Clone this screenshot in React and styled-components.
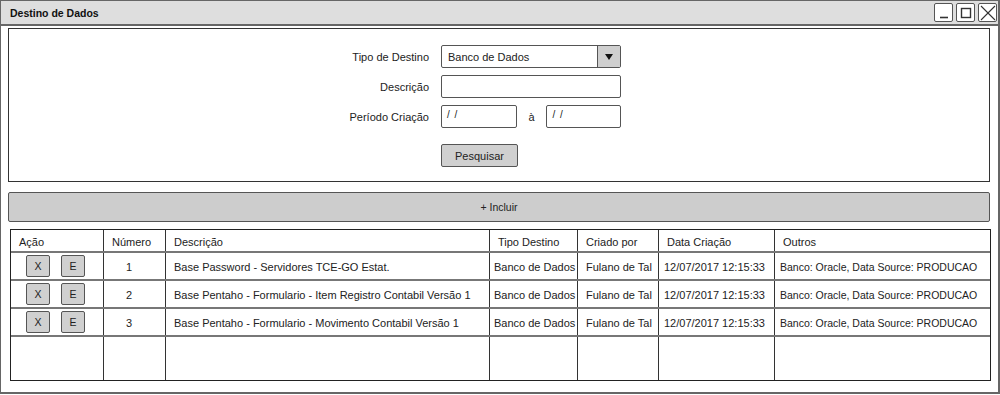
import React from 'react'
import styled, { createGlobalStyle } from 'styled-components'

const GlobalStyle = createGlobalStyle`
  html, body { margin: 0; padding: 0; background: #fff; }
  body {
    font-family: "Liberation Sans", Arial, sans-serif;
    font-size: 11px;
    color: #222;
  }
  * { box-sizing: border-box; }
`

const rows = [
  { num: 1, desc: 'Base Password - Servidores TCE-GO Estat.' },
  { num: 2, desc: 'Base Pentaho - Formulario - Item Registro Contabil Versão 1' },
  { num: 3, desc: 'Base Pentaho - Formulario - Movimento Contabil Versão 1' },
]

const cols = '92px 62px 324px 88px 81px 116px 1fr'

function App() {
  return (
    <>
      <GlobalStyle />
      <Window>
        <TitleBar>
          <Title>Destino de Dados</Title>
          <Controls>
            <CtrlBox>
              <svg width="14" height="14" viewBox="0 0 14 14">
                <line x1="3" y1="11.5" x2="11" y2="11.5" stroke="#333" strokeWidth="1.6" />
              </svg>
            </CtrlBox>
            <CtrlBox>
              <svg width="14" height="14" viewBox="0 0 14 14">
                <rect x="2.5" y="2.5" width="9" height="9" fill="none" stroke="#333" strokeWidth="1.4" />
              </svg>
            </CtrlBox>
            <CtrlBox>
              <svg width="16" height="16" viewBox="0 0 16 16">
                <line x1="1" y1="1" x2="15" y2="15" stroke="#333" strokeWidth="1.1" />
                <line x1="15" y1="1" x2="1" y2="15" stroke="#333" strokeWidth="1.1" />
              </svg>
            </CtrlBox>
          </Controls>
        </TitleBar>

        <Body>
          <SearchPanel>
            <Form>
              <Label>Tipo de Destino</Label>
              <Select>
                <span>Banco de Dados</span>
                <DropBtn>
                  <svg width="10" height="8" viewBox="0 0 10 8">
                    <polygon points="1,1 9,1 5,7" fill="#111" />
                  </svg>
                </DropBtn>
              </Select>

              <Label>Descrição</Label>
              <Input />

              <Label>Período Criação</Label>
              <DateRow>
                <Input $w="76px">/ /</Input>
                <Between>à</Between>
                <Input $w="75px">/ /</Input>
              </DateRow>

              <span />
              <SearchBtn>Pesquisar</SearchBtn>
            </Form>
          </SearchPanel>

          <AddBar>+ Incluir</AddBar>

          <Table>
            <HeadRow>
              <Cell>Ação</Cell>
              <Cell>Número</Cell>
              <Cell>Descrição</Cell>
              <Cell>Tipo Destino</Cell>
              <Cell>Criado por</Cell>
              <Cell>Data Criação</Cell>
              <Cell>Outros</Cell>
            </HeadRow>
            {rows.map((r) => (
              <DataRow key={r.num}>
                <ActionCell>
                  <SmallBtn>X</SmallBtn>
                  <SmallBtn>E</SmallBtn>
                </ActionCell>
                <Cell $pl="22px">{r.num}</Cell>
                <Cell>{r.desc}</Cell>
                <Cell $pl="4px">Banco de Dados</Cell>
                <Cell $pl="8px">Fulano de Tal</Cell>
                <Cell $pl="5px">12/07/2017 12:15:33</Cell>
                <Cell $pl="5px" $fs="10.5px">Banco: Oracle, Data Source: PRODUCAO</Cell>
              </DataRow>
            ))}
            <EmptyRow>
              <Cell />
              <Cell />
              <Cell />
              <Cell />
              <Cell />
              <Cell />
              <Cell />
            </EmptyRow>
          </Table>
        </Body>
      </Window>
    </>
  )
}

const Window = styled.div`
  width: 1000px;
  height: 394px;
  border: 1px solid #666;
  border-right-width: 2px;
  border-bottom-width: 2px;
  background: #fff;
  display: flex;
  flex-direction: column;
`

const TitleBar = styled.div`
  height: 25px;
  background: #dedede;
  border-bottom: 2px solid #666;
  display: flex;
  align-items: center;
  justify-content: space-between;
  padding: 0 1px 0 9px;
`

const Title = styled.div`
  font-weight: bold;
  font-size: 10.5px;
  color: #111;
`

const Controls = styled.div`
  display: flex;
  gap: 3px;
`

const CtrlBox = styled.div`
  width: 19px;
  height: 19px;
  border: 1.5px solid #555;
  border-radius: 2px;
  background: #fff;
  display: flex;
  align-items: center;
  justify-content: center;
`

const Body = styled.div`
  flex: 1;
  padding: 2px 8px 0 7px;
  display: flex;
  flex-direction: column;
`

const SearchPanel = styled.div`
  height: 154px;
  border: 1px solid #333;
  border-right-width: 1.5px;
  padding: 16px 0 0 320px;
`

const Form = styled.div`
  display: grid;
  grid-template-columns: 100px 180px;
  column-gap: 12px;
  row-gap: 7px;
  align-items: center;

  & > :nth-child(7),
  & > :nth-child(8) {
    margin-top: 9px;
  }
`

const Label = styled.div`
  text-align: right;
  color: #222;
`

const Select = styled.div`
  height: 23px;
  border: 1.5px solid #555;
  border-radius: 2px;
  display: flex;
  align-items: center;
  justify-content: space-between;
  padding-left: 6px;
  background: #fff;
`

const DropBtn = styled.div`
  width: 23px;
  height: 100%;
  border-left: 1.5px solid #555;
  background: #cfcfcf;
  display: flex;
  align-items: center;
  justify-content: center;
`

const Input = styled.div`
  width: ${(p) => p.$w || '180px'};
  height: 23px;
  border: 1.5px solid #555;
  border-radius: 2px;
  background: #fff;
  padding: 3px 0 0 5px;
  font-size: 10px;
  letter-spacing: 1px;
`

const DateRow = styled.div`
  display: flex;
  align-items: center;
`

const Between = styled.span`
  width: 30px;
  text-align: center;
`

const SearchBtn = styled.div`
  width: 77px;
  height: 23px;
  border: 1.5px solid #555;
  border-radius: 2px;
  background: #d0d0d0;
  display: flex;
  align-items: center;
  justify-content: center;
`

const AddBar = styled.div`
  margin-top: 10px;
  height: 30px;
  border: 1.5px solid #555;
  border-radius: 2px;
  background: #cdcdcd;
  display: flex;
  align-items: center;
  justify-content: center;
  font-size: 10.5px;
`

const Table = styled.div`
  margin: 7px -1px 0 2px;
  border: 1.5px solid #222;
  display: flex;
  flex-direction: column;
`

const RowBase = styled.div`
  display: grid;
  grid-template-columns: ${cols};
`

const HeadRow = styled(RowBase)`
  height: 23px;
  border-bottom: 2px solid #777;
`

const DataRow = styled(RowBase)`
  height: 28px;
  border-bottom: 2px solid #777;
`

const EmptyRow = styled(RowBase)`
  height: 43px;
`

const Cell = styled.div`
  display: flex;
  align-items: center;
  padding-left: ${(p) => p.$pl || '8px'};
  padding-top: 2px;
  font-size: ${(p) => p.$fs || '11px'};
  white-space: nowrap;
  overflow: hidden;
  border-left: 1px solid #333;
  &:first-child { border-left: none; }
`

const ActionCell = styled.div`
  display: flex;
  align-items: center;
  gap: 11px;
  padding-left: 15px;
`

const SmallBtn = styled.div`
  width: 24px;
  height: 22px;
  border: 1.5px solid #555;
  border-radius: 2px;
  background: #d0d0d0;
  display: flex;
  align-items: center;
  justify-content: center;
  font-size: 10.5px;
`

export default App
